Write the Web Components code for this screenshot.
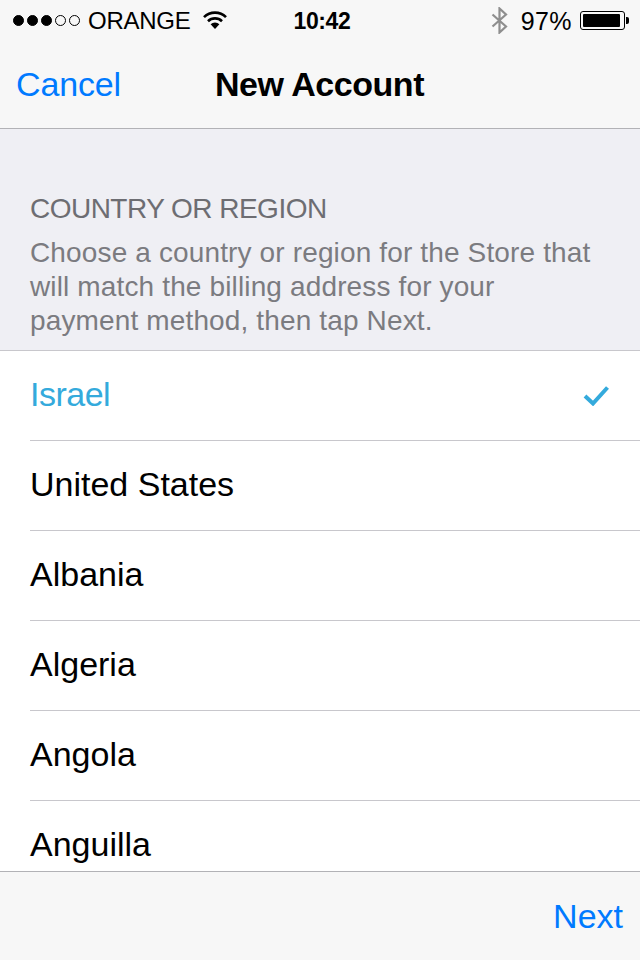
<!DOCTYPE html>
<html>
<head>
<meta charset="utf-8">
<title>New Account</title>
<style>
  html, body { margin: 0; padding: 0; height: 100%; }
  body { font-family: "Liberation Sans", Arial, sans-serif; background: #fff; overflow: hidden; }
</style>
</head>
<body>
<account-screen>
  <status-bar carrier="ORANGE" time="10:42" battery="97%"></status-bar>
  <nav-bar title="New Account" action="Cancel"></nav-bar>
  <section-header title="COUNTRY OR REGION">Choose a country or region for the Store that will match the billing address for your payment method, then tap Next.</section-header>
  <country-list>
    <country-row selected>Israel</country-row>
    <country-row>United States</country-row>
    <country-row>Albania</country-row>
    <country-row>Algeria</country-row>
    <country-row>Angola</country-row>
    <country-row>Anguilla</country-row>
  </country-list>
  <bottom-bar action="Next"></bottom-bar>
</account-screen>

<script>
class AccountScreen extends HTMLElement {
  constructor() {
    super();
    this.attachShadow({ mode: "open" });
    this.shadowRoot.innerHTML = `
      <style>
        :host {
          display: flex;
          flex-direction: column;
          width: 640px;
          height: 960px;
          overflow: hidden;
        }
      </style>
      <slot></slot>
    `;
  }
}

class StatusBar extends HTMLElement {
  constructor() {
    super();
    this.attachShadow({ mode: "open" });
    this.shadowRoot.innerHTML = `
      <style>
        :host {
          display: grid;
          grid-template-columns: 1fr auto 1fr;
          align-items: center;
          height: 40px;
          padding: 0 11px 0 13px;
          background: #f7f7f7;
          color: #000;
          font-size: 25px;
        }
        .left, .right { display: flex; align-items: center; }
        .right { justify-content: flex-end; }
        .dots { display: flex; gap: 3px; margin-right: 8px; }
        .dot {
          width: 11px;
          height: 11px;
          box-sizing: border-box;
          border-radius: 50%;
          border: 1px solid #000;
        }
        .dot.on { background: #000; }
        .carrier { font-size: 24px; letter-spacing: -.25px; padding-top: 2px; }
        .wifi { margin-left: 12px; display: block; }
        .time { font-weight: 700; font-size: 23px; letter-spacing: -.4px; margin-left: 2px; padding-top: 2px; }
        .bt { display: block; margin-right: 13px; }
        .pct { letter-spacing: .4px; padding-top: 2px; }
        .battery { display: flex; align-items: center; margin-left: 8px; }
        .cell {
          width: 45px;
          height: 19px;
          box-sizing: border-box;
          border: 1px solid #000;
          border-radius: 3px;
          padding: 2px;
        }
        .level { width: 94%; height: 100%; background: #000; border-radius: 1px; }
        .nub { width: 3px; height: 7px; background: #000; border-radius: 0 2px 2px 0; margin-left: 1px; }
      </style>
      <div class="left">
        <div class="dots">
          <span class="dot on"></span><span class="dot on"></span><span class="dot on"></span><span class="dot"></span><span class="dot"></span>
        </div>
        <span class="carrier">${this.getAttribute("carrier")}</span>
        <svg class="wifi" width="24" height="18" viewBox="0 0 24 18">
          <path d="M1 6.2 A15.5 15.5 0 0 1 23 6.2" fill="none" stroke="#000" stroke-width="2.6"/>
          <path d="M5 10.2 A10 10 0 0 1 19 10.2" fill="none" stroke="#000" stroke-width="2.6"/>
          <path d="M12 18 L7.6 13.2 A6.4 6.4 0 0 1 16.4 13.2 Z" fill="#000"/>
        </svg>
      </div>
      <div class="time">${this.getAttribute("time")}</div>
      <div class="right">
        <svg class="bt" width="17" height="27" viewBox="0 0 17 27">
          <path d="M1.5 7.5 L15 19.5 L8.5 25.5 L8.5 1.5 L15 7.5 L1.5 19.5" fill="none" stroke="#8e8e8e" stroke-width="2.2"/>
        </svg>
        <span class="pct">${this.getAttribute("battery")}</span>
        <div class="battery">
          <div class="cell"><div class="level"></div></div>
          <div class="nub"></div>
        </div>
      </div>
    `;
  }
}

class NavBar extends HTMLElement {
  constructor() {
    super();
    this.attachShadow({ mode: "open" });
    this.shadowRoot.innerHTML = `
      <style>
        :host {
          display: grid;
          grid-template-columns: 1fr auto 1fr;
          align-items: center;
          height: 88px;
          padding: 0 17px 0 16px;
          background: #f7f7f7;
          border-bottom: 1px solid #b2b2b6;
        }
        .action { color: #007aff; font-size: 34px; letter-spacing: -.15px; }
        .title { color: #000; font-size: 34px; font-weight: 700; letter-spacing: -.45px; }
      </style>
      <span class="action">${this.getAttribute("action")}</span>
      <span class="title">${this.getAttribute("title")}</span>
      <span></span>
    `;
  }
}

class SectionHeader extends HTMLElement {
  constructor() {
    super();
    this.attachShadow({ mode: "open" });
    this.shadowRoot.innerHTML = `
      <style>
        :host {
          display: block;
          height: 221px;
          box-sizing: border-box;
          padding: 63px 40px 0 30px;
          background: #efeff4;
          color: #6d6d72;
        }
        .title { font-size: 28px; line-height: 34px; margin-bottom: 10px; letter-spacing: -.52px; }
        .body { font-size: 28px; line-height: 34px; color: #7b7b80; letter-spacing: .14px; }
      </style>
      <div class="title">${this.getAttribute("title")}</div>
      <div class="body"><slot></slot></div>
    `;
  }
}

class CountryList extends HTMLElement {
  constructor() {
    super();
    this.attachShadow({ mode: "open" });
    this.shadowRoot.innerHTML = `
      <style>
        :host {
          display: block;
          flex: 1;
          min-height: 0;
          overflow: hidden;
          background: #fff;
          border-top: 1px solid #c8c7cc;
        }
      </style>
      <slot></slot>
    `;
  }
}

class CountryRow extends HTMLElement {
  constructor() {
    super();
    this.attachShadow({ mode: "open" });
    const selected = this.hasAttribute("selected");
    this.shadowRoot.innerHTML = `
      <style>
        :host {
          display: block;
          padding-left: 30px;
        }
        .row {
          display: flex;
          justify-content: space-between;
          align-items: center;
          height: 89px;
          padding-right: 30px;
          border-bottom: 1px solid #c8c7cc;
          font-size: 34px;
          color: ${selected ? "#34aadc" : "#000"};
        }
        .label { margin-bottom: 2px; ${selected ? "letter-spacing: -.5px;" : ""} }
        svg { display: block; margin-left: -1px; margin-right: 1px; }
      </style>
      <div class="row">
        <span class="label"><slot></slot></span>
        ${selected ? `<svg width="26" height="21" viewBox="0 0 26 21">
          <path d="M2 11 L10 18.5 L24.5 2.5" fill="none" stroke="#34aadc" stroke-width="4"/>
        </svg>` : ""}
      </div>
    `;
  }
}

class BottomBar extends HTMLElement {
  constructor() {
    super();
    this.attachShadow({ mode: "open" });
    this.shadowRoot.innerHTML = `
      <style>
        :host {
          display: flex;
          justify-content: flex-end;
          align-items: center;
          height: 88px;
          padding: 0 17px;
          background: #f7f7f7;
          border-top: 1px solid #b2b2b6;
          color: #007aff;
          font-size: 34px;
        }
      </style>
      <span>${this.getAttribute("action")}</span>
    `;
  }
}

customElements.define("account-screen", AccountScreen);
customElements.define("status-bar", StatusBar);
customElements.define("nav-bar", NavBar);
customElements.define("section-header", SectionHeader);
customElements.define("country-list", CountryList);
customElements.define("country-row", CountryRow);
customElements.define("bottom-bar", BottomBar);
</script>
</body>
</html>
